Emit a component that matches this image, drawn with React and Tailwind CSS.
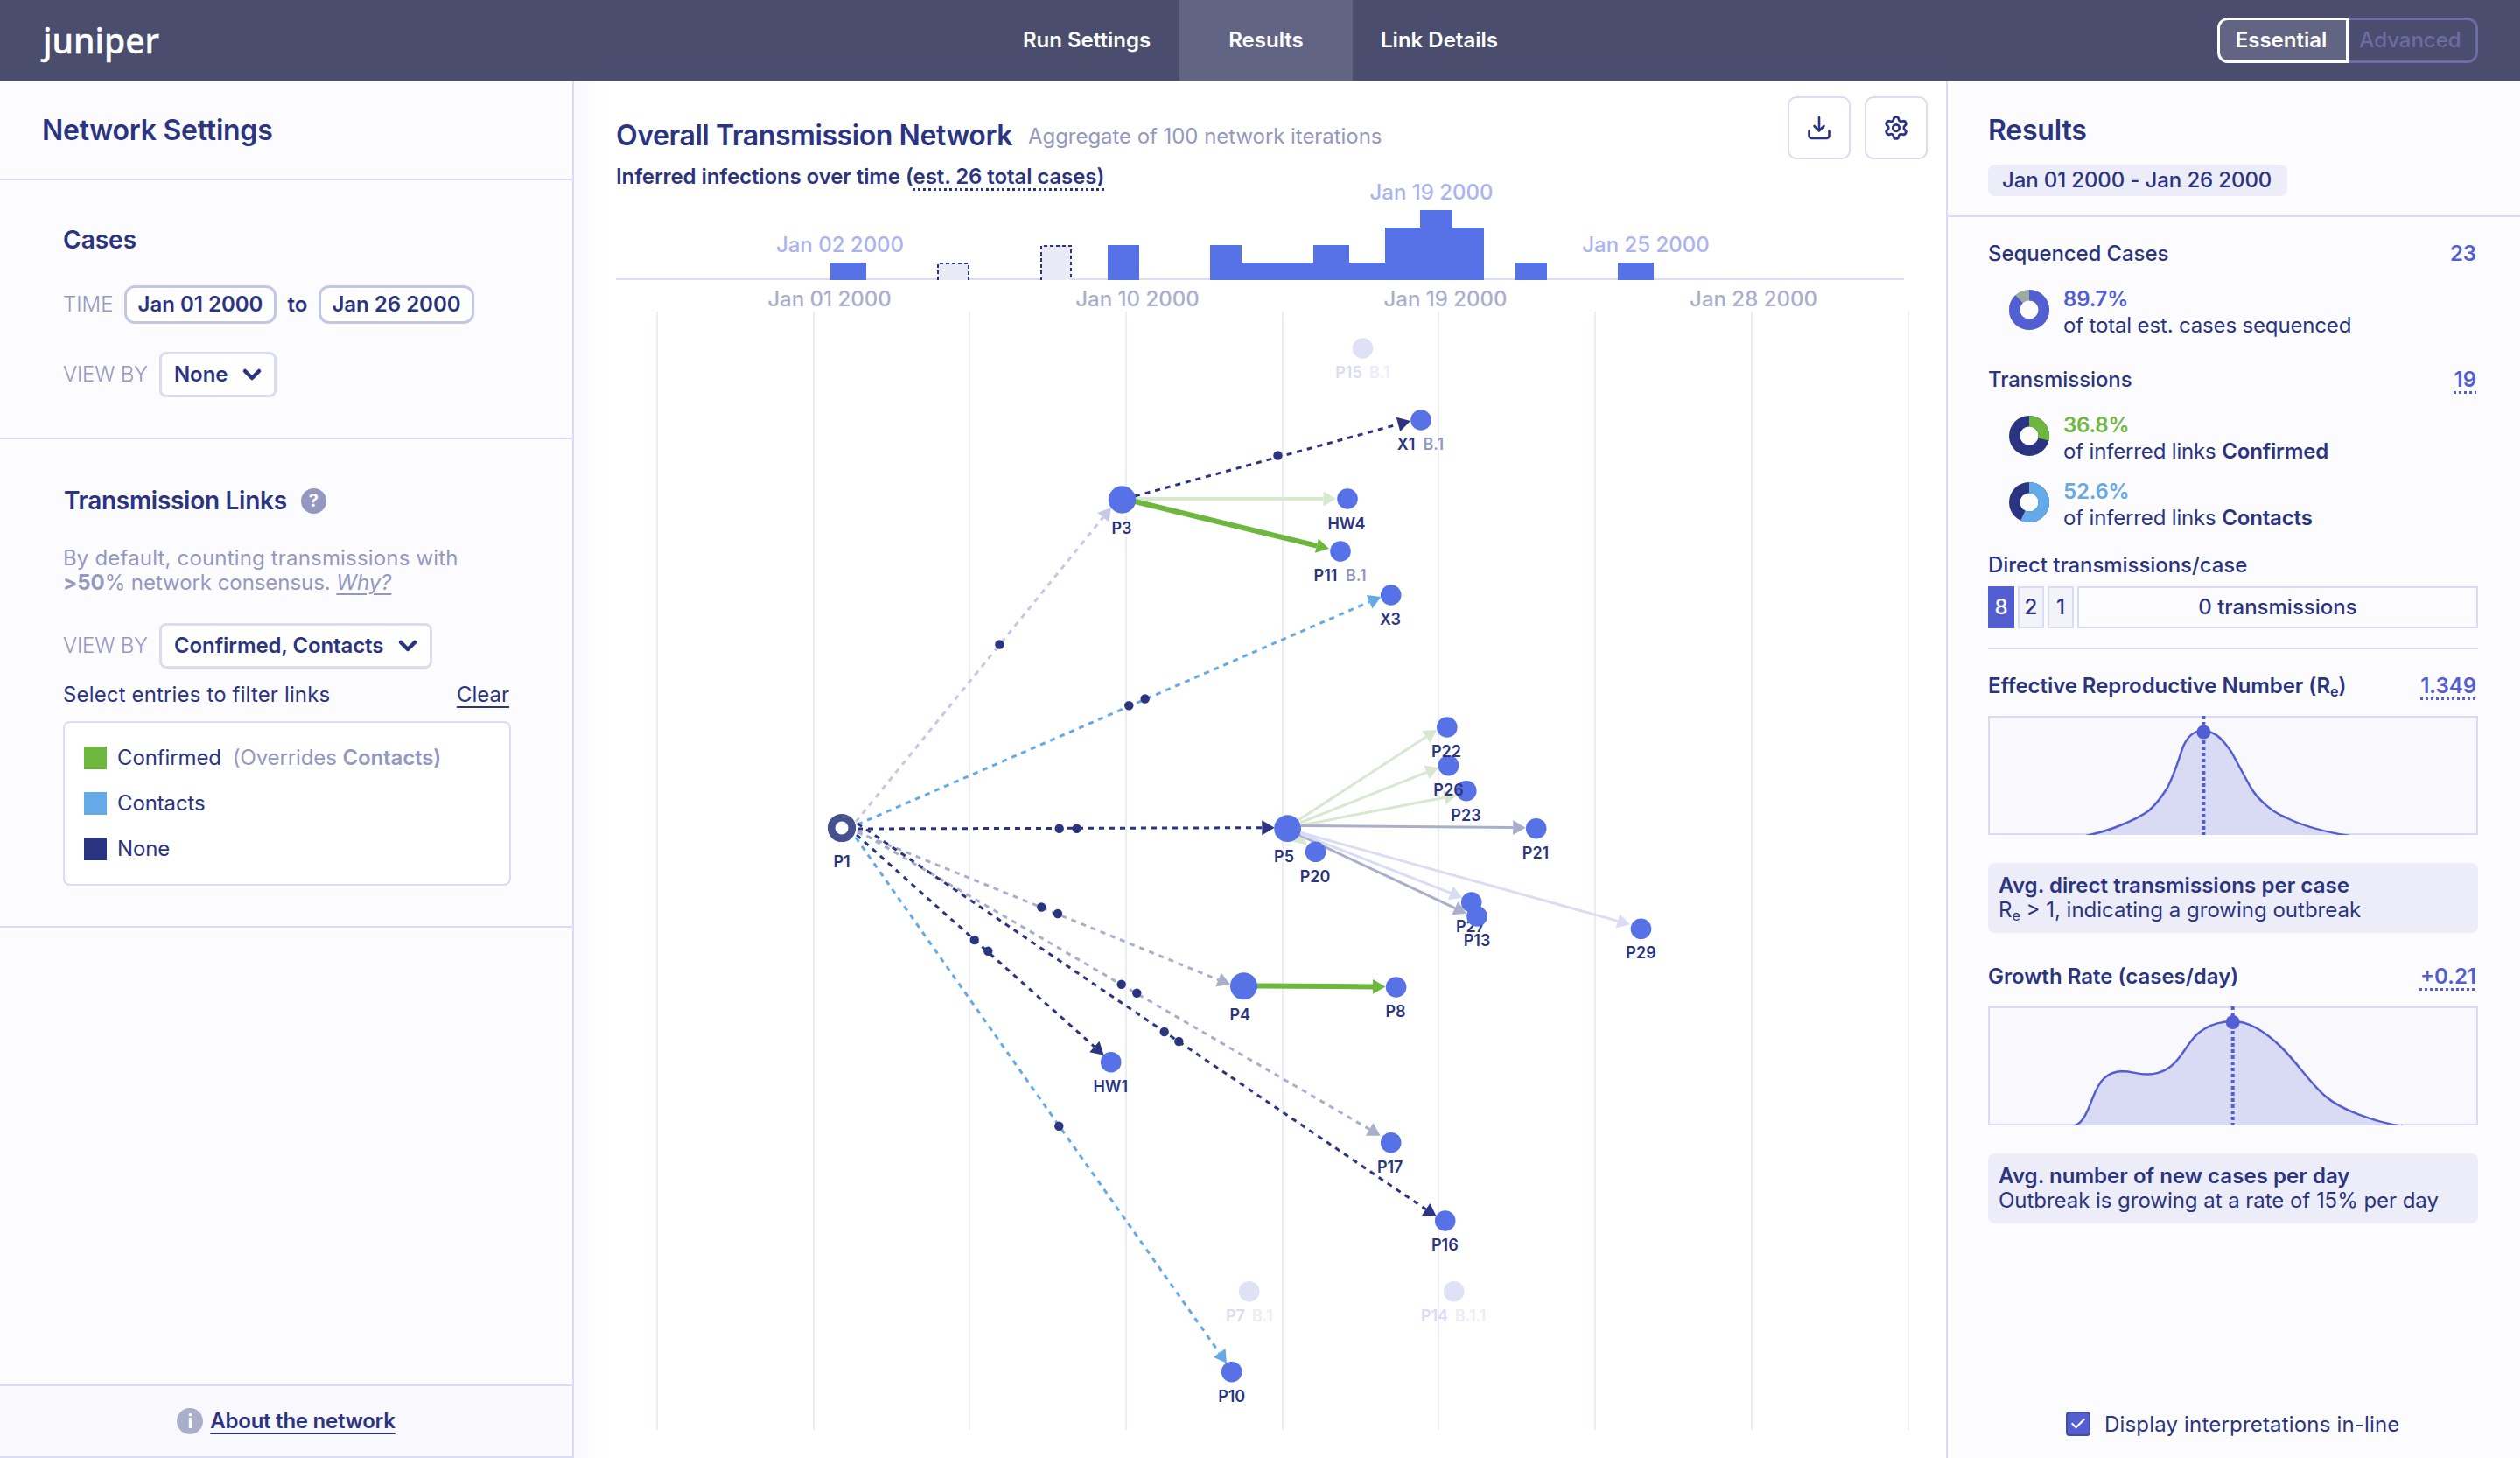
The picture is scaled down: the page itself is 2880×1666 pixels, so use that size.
import { Check, ChevronDown, Settings } from "lucide-react";

const NAVY = "#2b3480";
const GRAY = "#a9aecb";
const BLUE = "#64a9e8";
const GREEN = "#6eb73f";
const PALE_GREEN = "#d8e7cf";
const LILAC = "#c5c8e6";
const PALE = "#dadcf3";

const gridLines = [751, 930, 1108, 1287, 1466, 1644, 1823, 2002, 2181];

// x, width, number of cases
const bars = [
  [949, 41, 1],
  [1266, 36, 2],
  [1383, 36, 2],
  [1419, 82, 1],
  [1501, 41, 2],
  [1542, 41, 1],
  [1583, 40, 3],
  [1623, 37, 4],
  [1660, 36, 3],
  [1732, 36, 1],
  [1849, 41, 1],
];

const inferredBars = [
  [1072, 35, 1],
  [1190, 34, 2],
];

const peakLabels = [
  [960, 288, "Jan 02 2000"],
  [1636, 228, "Jan 19 2000"],
  [1881, 288, "Jan 25 2000"],
];

const axisLabels = [
  [948, "Jan 01 2000"],
  [1300, "Jan 10 2000"],
  [1652, "Jan 19 2000"],
  [2004, "Jan 28 2000"],
];

// dots are the missing intermediate cases on a link
const links = [
  { from: [1484, 937], to: [1642, 834], color: PALE_GREEN },
  { from: [1486, 940], to: [1644, 877], color: PALE_GREEN },
  { from: [1487, 943], to: [1665, 908.5], color: PALE_GREEN },
  { from: [1482, 954], to: [1493.7, 965.7], color: PALE_GREEN },
  { from: [1487, 943.5], to: [1743.7, 945.7], color: GRAY },
  { from: [1485, 954], to: [1676, 1043.7], color: GRAY },
  { from: [1487, 953], to: [1671.4, 1025.7], color: PALE },
  { from: [1487, 951.5], to: [1863, 1056.3], color: PALE },
  { from: [1298, 570], to: [1527, 570], color: PALE_GREEN, width: 4 },
  { from: [1297, 573], to: [1519, 627], color: GREEN, width: 6 },
  { from: [1436, 1126.5], to: [1583.5, 1127.5], color: GREEN, width: 6 },
  { from: [978, 939], to: [1270, 580], color: LILAC, dashed: true, dots: [[1142.4, 736.5]] },
  { from: [980, 942], to: [1578.4, 682], color: BLUE, dashed: true, dots: [[1290.3, 806.3], [1308.7, 798.5]] },
  { from: [980, 951], to: [1406, 1125], color: GRAY, dashed: true, dots: [[1190.3, 1036.5], [1209, 1044]] },
  { from: [980, 949], to: [1577.7, 1297.7], color: GRAY, dashed: true, dots: [[1281.7, 1124.7], [1299.3, 1134.7]] },
  { from: [980, 947], to: [1456.8, 945.7], color: NAVY, dashed: true, dots: [[1210.7, 946.8], [1230.7, 946.8]] },
  { from: [980, 941], to: [1641.7, 1390], color: NAVY, dashed: true, dots: [[1330.7, 1179], [1347.3, 1190]] },
  { from: [979, 954], to: [1261.7, 1205.7], color: NAVY, dashed: true, dots: [[1113.7, 1074], [1129.3, 1086.7]] },
  { from: [978, 957], to: [1402, 1557.7], color: BLUE, dashed: true, dots: [[1210.3, 1286.7]] },
  { from: [1297, 567], to: [1612, 481], color: NAVY, dashed: true, dots: [[1460.5, 520.5]] },
];

// lx, ly: label center and baseline
const nodes = [
  { id: "P3", x: 1282.5, y: 571, r: 15.7, lx: 1282, ly: 610 },
  { id: "X1", x: 1624, y: 480, lx: 1607, ly: 514, lineage: "B.1", px: 1626.5 },
  { id: "HW4", x: 1540, y: 570, lx: 1539, ly: 604.5 },
  { id: "P11", x: 1532, y: 630, lx: 1515, ly: 664, lineage: "B.1", px: 1538 },
  { id: "X3", x: 1589.7, y: 680, lx: 1589, ly: 714 },
  { id: "P23", x: 1675.8, y: 903.7, lx: 1675.5, ly: 938 },
  { id: "P26", x: 1655.5, y: 874.7, lx: 1655.5, ly: 908.5 },
  { id: "P22", x: 1653.8, y: 831, lx: 1653, ly: 865 },
  { id: "P21", x: 1755.7, y: 946.7, lx: 1755, ly: 981 },
  { id: "P5", x: 1471.6, y: 946.7, r: 15.4, lx: 1467.5, ly: 985 },
  { id: "P20", x: 1503.6, y: 973.3, lx: 1503, ly: 1007.5 },
  { id: "P27", x: 1681.7, y: 1031, lx: 1680.6, ly: 1065 },
  { id: "P13", x: 1688, y: 1047, lx: 1688, ly: 1081 },
  { id: "P29", x: 1875.5, y: 1061.3, lx: 1875.5, ly: 1095.3 },
  { id: "P4", x: 1421.5, y: 1126.7, r: 15.5, lx: 1417.3, ly: 1165.5 },
  { id: "P8", x: 1595.6, y: 1128, lx: 1595, ly: 1162.3 },
  { id: "HW1", x: 1269.7, y: 1213.7, lx: 1269.3, ly: 1247.5 },
  { id: "P17", x: 1589.7, y: 1305.7, lx: 1588.7, ly: 1339.7 },
  { id: "P16", x: 1651.7, y: 1395, lx: 1651.3, ly: 1429.3 },
  { id: "P10", x: 1407.7, y: 1567.7, lx: 1407.7, ly: 1601.5 },
  { id: "P15", x: 1557.5, y: 398, lx: 1541.5, ly: 432, lineage: "B.1", px: 1565, faded: true },
  { id: "P7", x: 1427.7, y: 1475.7, lx: 1412, ly: 1509.7, lineage: "B.1", px: 1431, faded: true },
  { id: "P14", x: 1661.7, y: 1475.7, lx: 1639.5, ly: 1509.7, lineage: "B.1.1", px: 1663, faded: true },
];

const Link = ({ from, to, color, width = 3, dashed, dots = [] }) => {
  const dx = to[0] - from[0];
  const dy = to[1] - from[1];
  const len = Math.hypot(dx, dy);
  const ux = dx / len;
  const uy = dy / len;
  const bx = to[0] - ux * 14.5;
  const by = to[1] - uy * 14.5;
  const head = `${to[0]},${to[1]} ${bx - uy * 8.4},${by + ux * 8.4} ${bx + uy * 8.4},${by - ux * 8.4}`;

  return (
    <g>
      <line
        x1={from[0]}
        y1={from[1]}
        x2={bx}
        y2={by}
        stroke={color}
        strokeWidth={width}
        strokeDasharray={dashed ? "6 6" : undefined}
      />
      <polygon points={head} fill={color} />
      {dots.map(([x, y]) => (
        <circle key={x} cx={x} cy={y} r="5.2" fill={NAVY} />
      ))}
    </g>
  );
};

const Node = ({ id, x, y, r = 11.8, lx, ly, lineage, px, faded }) => (
  <g className="text-[18px] font-semibold">
    <circle cx={x} cy={y} r={r} fill={faded ? "#dfe1f6" : "#5672e6"} />
    <text x={lx} y={ly} textAnchor="middle" fill={faded ? "#d9dcf2" : NAVY}>
      {id}
    </text>
    {lineage && (
      <text x={px} y={ly} fill={faded ? "#ecedf8" : "#9498c0"}>
        {lineage}
      </text>
    )}
  </g>
);

const NetworkChart = () => (
  <svg className="block h-[1450px] w-[1568px] overflow-visible" viewBox="656 216 1568 1450">
    <rect x="704" y="318" width="1472" height="2" fill="#dadcf3" />
    {bars.map(([x, w, n]) => (
      <rect key={x} x={x} y={320 - n * 20} width={w} height={n * 20} fill="#5672e6" />
    ))}
    {inferredBars.map(([x, w, n]) => (
      <g key={x}>
        <rect x={x} y={320 - n * 20} width={w} height={n * 20} fill="#e9eaf6" />
        <path
          d={`M${x} 320V${321 - n * 20}H${x + w}V320`}
          fill="none"
          stroke={NAVY}
          strokeWidth="2"
          strokeDasharray="4 3"
        />
      </g>
    ))}
    <g className="text-[24px] font-medium" textAnchor="middle">
      {peakLabels.map(([x, y, label]) => (
        <text key={label} x={x} y={y} fill="#a9b4ef">
          {label}
        </text>
      ))}
      {axisLabels.map(([x, label]) => (
        <text key={label} x={x} y="350" fill="#a9aecb">
          {label}
        </text>
      ))}
    </g>
    {gridLines.map((x) => (
      <rect key={x} x={x - 1} y="356" width="2" height="1278" fill="#ecedf9" />
    ))}
    {links.map((link, i) => (
      <Link key={i} {...link} />
    ))}
    <circle cx="962" cy="946" r="11.8" fill="#fff" stroke="#45528f" strokeWidth="8.6" />
    <text x="962" y="990.7" textAnchor="middle" fill={NAVY} className="text-[18px] font-semibold">
      P1
    </text>
    {nodes.map((node) => (
      <Node key={node.id} {...node} />
    ))}
  </svg>
);

const Donut = ({ share, color, rest }) => (
  <svg className="mt-1 size-[46px] -rotate-90" viewBox="0 0 46 46">
    <circle cx="23" cy="23" r="16.8" fill="none" stroke={rest} strokeWidth="12.4" />
    <circle
      cx="23"
      cy="23"
      r="16.8"
      fill="none"
      stroke={color}
      strokeWidth="12.4"
      pathLength="100"
      strokeDasharray={`${share} 100`}
    />
  </svg>
);

const DonutRow = ({ share, color, rest, percent, percentClass, className, children }) => (
  <div className={`flex pl-6 ${className}`}>
    <Donut share={share} color={color} rest={rest} />
    <div className="ml-4 leading-[30px]">
      <p className={`font-semibold tracking-[-0.2px] ${percentClass}`}>{percent}</p>
      <p className="tracking-[-0.16px]">{children}</p>
    </div>
  </div>
);

const Density = ({ viewBox, d, cx, cy, top }) => (
  <svg className="mt-5 block h-[136px] w-[560px]" viewBox={viewBox}>
    <rect x="2273" y={top + 1} width="558" height="134" fill="#f8f8fd" stroke="#dadcf3" strokeWidth="2" />
    <path d={d} fill="#d9dbf5" stroke="#545ed3" strokeWidth="2.5" />
    <line x1={cx} x2={cx} y1={top} y2={top + 136} stroke="#545ed3" strokeWidth="4" strokeDasharray="4 3" />
    <circle cx={cx} cy={cy} r="8" fill="#545ed3" />
  </svg>
);

const Note = ({ title, children }) => (
  <div className="mt-8 h-20 rounded-lg bg-[#ecedf8] px-3 pt-3 leading-7">
    <p className="font-semibold tracking-[0.05px]">{title}</p>
    <p>{children}</p>
  </div>
);

const Value = ({ children }) => (
  <span className="mr-0.5 font-semibold text-[#545ed3] underline decoration-dotted decoration-3 underline-offset-[5px] [text-decoration-skip-ink:none]">
    {children}
  </span>
);

const Select = ({ value, className }) => (
  <button
    className={`ml-3.5 flex h-[52px] items-center justify-between rounded-lg border-3 border-[#dadcf3] bg-white pr-[9px] pl-3.5 font-semibold tracking-[-0.1px] ${className}`}
  >
    {value}
    <ChevronDown className="size-8" strokeWidth={3.4} />
  </button>
);

const DateInput = ({ value, className }) => (
  <span
    className={`flex h-11 items-center justify-center rounded-xl border-3 border-[#c3c7e6] bg-white font-semibold ${className}`}
  >
    {value}
  </span>
);

const legend = [
  { label: "Confirmed", color: "bg-[#6eb73f]", overrides: "Contacts" },
  { label: "Contacts", color: "bg-[#64a9e8]" },
  { label: "None", color: "bg-[#2b3480]" },
];

const Header = () => (
  <header className="grid h-[92px] shrink-0 grid-cols-[1fr_auto_1fr] items-center bg-[#4b4d6e] px-12 font-semibold text-white">
    <span className="pb-0.5 pl-px font-['Noto_Sans',sans-serif] text-[39px] leading-none font-medium [-webkit-text-stroke:0.4px_white]">
      juniper
    </span>
    <nav className="flex h-full">
      <a className="flex w-[212px] items-center justify-center">Run Settings</a>
      <a className="flex w-[198px] items-center justify-center bg-[#626483]">Results</a>
      <a className="flex w-[198px] items-center justify-center">Link Details</a>
    </nav>
    <div className="flex h-[52px] justify-self-end">
      <button className="flex w-[150px] items-center justify-center rounded-l-xl border-3 border-white bg-[#626483] pr-1">
        Essential
      </button>
      <button className="flex w-[148px] items-center justify-center rounded-r-xl border-3 border-l-0 border-[#6b6da3] pr-1 font-medium text-[#6b6da3]">
        Advanced
      </button>
    </div>
  </header>
);

const NetworkSettings = () => (
  <aside className="flex w-[656px] shrink-0 flex-col border-r-2 border-[#dadcf3] bg-[#fcfcff]">
    <h2 className="flex h-[114px] items-center border-b-2 border-[#dadcf3] pt-0.5 pl-12 text-[32px] font-semibold tracking-[-0.24px]">
      Network Settings
    </h2>

    <section className="border-b-2 border-[#dadcf3] pt-[50px] pb-[46px] pl-[72px]">
      <h3 className="text-[28px] leading-9 font-semibold">Cases</h3>
      <div className="mt-[34px] flex items-center">
        <span className="w-[70px] font-light text-[#9498c0]">TIME</span>
        <DateInput value="Jan 01 2000" className="w-[174px]" />
        <span className="w-12 text-center font-semibold">to</span>
        <DateInput value="Jan 26 2000" className="w-[178px]" />
      </div>
      <div className="mt-8 flex items-center">
        <span className="w-24 font-light tracking-[-0.2px] whitespace-nowrap text-[#9498c0]">VIEW BY</span>
        <Select value="None" className="w-[134px]" />
      </div>
    </section>

    <section className="border-b-2 border-[#dadcf3] pt-[52px] pr-[70px] pb-[46px] pl-[72px]">
      <div className="flex items-center">
        <h3 className="pl-px text-[28px] leading-9 font-semibold tracking-[-0.28px]">Transmission Links</h3>
        <span className="ml-4 flex size-[29px] items-center justify-center rounded-full bg-[#9498c0] text-[20px] font-bold text-white">
          ?
        </span>
      </div>
      <p className="mt-[34px] leading-7 whitespace-nowrap text-[#9498c0]">
        <span className="tracking-[0.17px]">By default, counting transmissions with</span>
        <br />
        <span className="tracking-[-0.06px]">
          <b className="font-bold">&gt;50</b>% network consensus.{" "}
          <i className="underline decoration-2 underline-offset-4">Why?</i>
        </span>
      </p>
      <div className="mt-8 flex items-center">
        <span className="w-24 font-light tracking-[-0.2px] whitespace-nowrap text-[#9498c0]">VIEW BY</span>
        <Select value="Confirmed, Contacts" className="w-[312px]" />
      </div>
      <div className="mt-4 flex justify-between pr-0.5 leading-7">
        <span className="tracking-[0.15px]">Select entries to filter links</span>
        <a className="underline decoration-2 underline-offset-[5px]">Clear</a>
      </div>
      <ul className="mt-4 flex h-[188px] flex-col justify-center gap-[26px] rounded-lg border-2 border-[#dadcf3] bg-white px-[22px] tracking-[-0.12px]">
        {legend.map(({ label, color, overrides }) => (
          <li key={label} className="flex h-[26px] items-center gap-3">
            <span className={`size-[26px] ${color}`} />
            <span>{label}</span>
            {overrides && (
              <span className="ml-px text-[#9498c0]">
                (Overrides <b className="font-semibold">{overrides})</b>
              </span>
            )}
          </li>
        ))}
      </ul>
    </section>

    <footer className="mt-auto flex h-[84px] items-center justify-center gap-2 border-y-2 border-[#dadcf3] bg-[#f8f8fd] font-semibold tracking-[-0.24px]">
      <span className="flex size-[30px] items-center justify-center rounded-full bg-[#a9aecb] text-[22px] font-bold text-white">
        i
      </span>
      <a className="underline decoration-2 underline-offset-[5px]">About the network</a>
    </footer>
  </aside>
);

const Network = () => (
  <main className="w-[1568px] bg-linear-to-r from-[#f9f9fd] via-white via-[2.5%] to-white">
    <div className="flex h-[124px] justify-between pt-[18px] pr-[21px] pl-12">
      <div className="pt-[25px]">
        <div className="flex items-baseline gap-[18px]">
          <h1 className="text-[32px] leading-10 font-semibold tracking-[-0.42px]">Overall Transmission Network</h1>
          <span className="-translate-y-0.5 tracking-[-0.05px] text-[#9498c0]">
            Aggregate of 100 network iterations
          </span>
        </div>
        <p className="mt-3 leading-7 font-semibold tracking-[-0.09px]">
          Inferred infections over time (
          <span className="underline decoration-dotted decoration-3 underline-offset-[5px] [text-decoration-skip-ink:none]">
            est. 26 total cases)
          </span>
        </p>
      </div>
      <div className="flex gap-4">
        <button className="flex size-[72px] items-center justify-center rounded-[10px] border-2 border-[#dadcf3] bg-white">
          <svg
            className="size-[30px]"
            viewBox="0 0 30 30"
            fill="none"
            stroke="currentColor"
            strokeWidth="2.6"
            strokeLinecap="round"
            strokeLinejoin="round"
          >
            <path d="M15 3v15.5M9.5 13l5.5 5.5 5.5-5.5M3.5 18.5V24a3 3 0 0 0 3 3h17a3 3 0 0 0 3-3v-5.5" />
          </svg>
        </button>
        <button className="flex size-[72px] items-center justify-center rounded-[10px] border-2 border-[#dadcf3] bg-white">
          <Settings className="size-[30px]" strokeWidth={2.2} />
        </button>
      </div>
    </div>
    <NetworkChart />
  </main>
);

const Results = () => (
  <aside className="flex w-[656px] flex-col border-l-2 border-[#dadcf3] bg-[#fcfcff]">
    <div className="h-[156px] border-b-2 border-[#dadcf3] pt-[37px] pl-[46px]">
      <h2 className="text-[32px] leading-10 font-semibold tracking-[-0.2px]">Results</h2>
      <span className="mt-[19px] flex h-9 w-[342px] items-center rounded-lg bg-[#ecedf8] pl-4 font-medium tracking-[-0.12px]">
        Jan 01 2000 - Jan 26 2000
      </span>
    </div>

    <div className="flex w-[606px] flex-col pt-7 pl-[46px] leading-7">
      <div className="flex justify-between font-medium tracking-[-0.1px]">
        <span>Sequenced Cases</span>
        <span className="mr-0.5 font-semibold text-[#545ed3]">23</span>
      </div>
      <DonutRow
        className="mt-[23px]"
        share={88}
        color="#545ed3"
        rest="#9bab9f"
        percent="89.7%"
        percentClass="text-[#545ed3]"
      >
        of total est. cases sequenced
      </DonutRow>
      <div className="mt-[33px] flex justify-between font-medium">
        <span className="tracking-[-0.08px]">Transmissions</span>
        <Value>19</Value>
      </div>
      <DonutRow
        className="mt-[23px]"
        share={29}
        color={GREEN}
        rest={NAVY}
        percent="36.8%"
        percentClass="text-[#6eb73f]"
      >
        of inferred links <b className="font-semibold">Confirmed</b>
      </DonutRow>
      <DonutRow
        className="mt-4"
        share={57}
        color={BLUE}
        rest={NAVY}
        percent="52.6%"
        percentClass="text-[#64a9e8]"
      >
        of inferred links <b className="font-semibold">Contacts</b>
      </DonutRow>

      <span className="mt-[25px] font-medium tracking-[-0.06px]">Direct transmissions/case</span>
      <div className="mt-2.5 flex h-12 gap-1 font-medium">
        <span className="flex w-[30px] items-center justify-center bg-[#545ed3] text-white">8</span>
        <span className="flex w-[30px] items-center justify-center border-2 border-[#dadcf3] bg-[#f3f3fa]">2</span>
        <span className="flex w-[30px] items-center justify-center border-2 border-[#dadcf3] bg-[#f3f3fa]">1</span>
        <span className="flex flex-1 items-center justify-center border-2 border-[#dadcf3]">
          0 transmissions
        </span>
      </div>
      <hr className="mt-[22px] border-t-2 border-[#dadcf3]" />

      <div className="mt-7 flex h-7 justify-between font-semibold">
        <span className="tracking-[-0.06px]">
          Effective Reproductive Number (R<sub className="text-[16px]">e</sub>)
        </span>
        <Value>1.349</Value>
      </div>
      <Density
        viewBox="2272 818 560 136"
        top={818}
        cx={2518.4}
        cy={836.5}
        d="M2384 955C2397 952 2409 949 2422 943.5C2436 938 2447 933 2456 926C2465 918 2472 908 2477 900C2487 880 2490 866 2495 853C2500 842 2506 835 2518 835C2533 835 2543 849 2550 859C2560 877 2566 889 2573 901C2581 914 2597 928 2612 934C2634 945 2660 951 2685 955"
      />
      <Note title="Avg. direct transmissions per case">
        R<sub className="text-[16px]">e</sub> &gt; 1, indicating a growing outbreak
      </Note>

      <div className="mt-9 flex justify-between font-semibold">
        <span>Growth Rate (cases/day)</span>
        <Value>+0.21</Value>
      </div>
      <Density
        viewBox="2272 1150 560 136"
        top={1150}
        cx={2551.7}
        cy={1168}
        d="M2368 1287C2378 1286 2384 1275 2391 1256C2400 1232 2409 1225 2425 1224C2438 1224 2442 1228 2455 1227.600C2470 1227 2481 1221 2490 1209C2500 1196 2505 1186 2513 1180C2524 1171 2538 1167 2552 1167C2572 1167 2590 1180 2607 1196.500C2625 1214 2642 1240 2658 1253C2674 1267 2712 1282 2746 1287"
      />
      <Note title="Avg. number of new cases per day">
        <span className="tracking-[-0.04px]">Outbreak is growing at a rate of 15% per day</span>
      </Note>
    </div>

    <label className="mt-auto mb-[25px] ml-[135px] flex h-7 items-center gap-4">
      <span className="flex size-7 items-center justify-center rounded-sm border-2 border-[#454c9c] bg-[#545ed3] text-white">
        <Check className="size-5" strokeWidth={2.6} />
      </span>
      <span className="pt-px tracking-[0.18px]">Display interpretations in-line</span>
    </label>
  </aside>
);

export default function App() {
  return (
    <div className="flex h-[1666px] w-[2880px] flex-col overflow-hidden bg-white font-[Inter,sans-serif] text-[24px] text-[#2b3480]">
      <Header />
      <div className="flex min-h-0 flex-1">
        <NetworkSettings />
        <Network />
        <Results />
      </div>
    </div>
  );
}
